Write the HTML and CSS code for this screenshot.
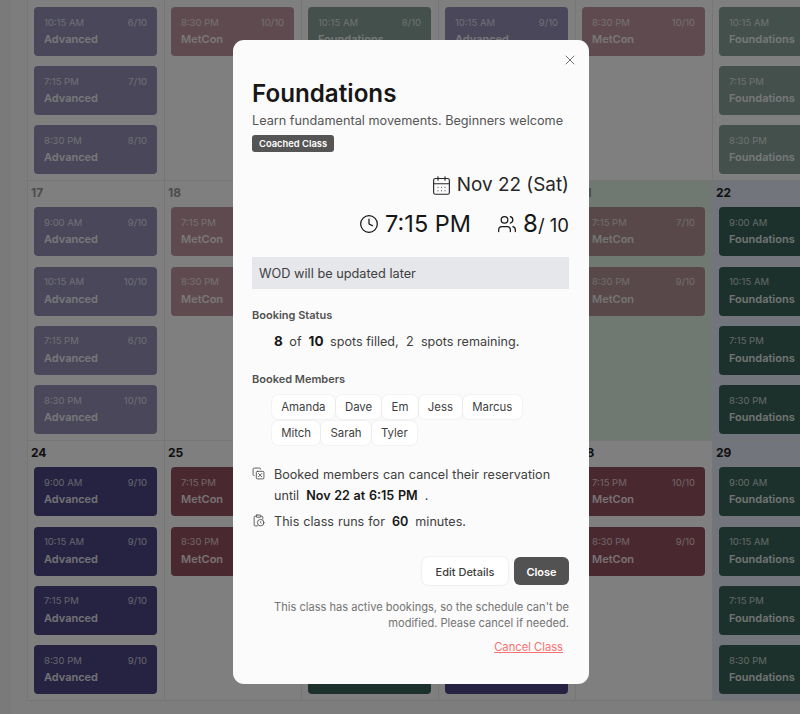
FILE: index.html
```html
<!DOCTYPE html>
<html lang="en">
<head>
    <meta charset="UTF-8">
    <title>Class schedule</title>
    <link rel="stylesheet" href="styles.css">
</head>
<body>
    <div class="page">
    <div class="calendar">
        <div class="week week-first">
            <div class="day">
                <div class="card advanced past"><div class="card-top"><span>10:15 AM</span><span>6/10</span></div><div class="card-name">Advanced</div></div>
                <div class="card advanced past"><div class="card-top"><span>7:15 PM</span><span>7/10</span></div><div class="card-name">Advanced</div></div>
                <div class="card advanced past"><div class="card-top"><span>8:30 PM</span><span>8/10</span></div><div class="card-name">Advanced</div></div>
            </div>
            <div class="day">
                <div class="card metcon past"><div class="card-top"><span>8:30 PM</span><span>10/10</span></div><div class="card-name">MetCon</div></div>
            </div>
            <div class="day">
                <div class="card foundations past"><div class="card-top"><span>10:15 AM</span><span>8/10</span></div><div class="card-name">Foundations</div></div>
            </div>
            <div class="day">
                <div class="card advanced past"><div class="card-top"><span>10:15 AM</span><span>9/10</span></div><div class="card-name">Advanced</div></div>
            </div>
            <div class="day">
                <div class="card metcon past"><div class="card-top"><span>8:30 PM</span><span>10/10</span></div><div class="card-name">MetCon</div></div>
            </div>
            <div class="day">
                <div class="card foundations past"><div class="card-top"><span>10:15 AM</span><span>8/10</span></div><div class="card-name">Foundations</div></div>
                <div class="card foundations past"><div class="card-top"><span>7:15 PM</span><span>8/10</span></div><div class="card-name">Foundations</div></div>
                <div class="card foundations past"><div class="card-top"><span>8:30 PM</span><span>8/10</span></div><div class="card-name">Foundations</div></div>
            </div>
        </div>
        <div class="week">
            <div class="day">
                <div class="day-num muted">17</div>
                <div class="card advanced past"><div class="card-top"><span>9:00 AM</span><span>9/10</span></div><div class="card-name">Advanced</div></div>
                <div class="card advanced past"><div class="card-top"><span>10:15 AM</span><span>10/10</span></div><div class="card-name">Advanced</div></div>
                <div class="card advanced past"><div class="card-top"><span>7:15 PM</span><span>6/10</span></div><div class="card-name">Advanced</div></div>
                <div class="card advanced past"><div class="card-top"><span>8:30 PM</span><span>10/10</span></div><div class="card-name">Advanced</div></div>
            </div>
            <div class="day">
                <div class="day-num muted">18</div>
                <div class="card metcon past"><div class="card-top"><span>7:15 PM</span><span>8/10</span></div><div class="card-name">MetCon</div></div>
                <div class="card metcon past"><div class="card-top"><span>8:30 PM</span><span>8/10</span></div><div class="card-name">MetCon</div></div>
            </div>
            <div class="day"><div class="day-num muted">19</div></div>
            <div class="day"><div class="day-num muted">20</div></div>
            <div class="day today">
                <div class="day-num muted">21</div>
                <div class="card metcon past"><div class="card-top"><span>7:15 PM</span><span>7/10</span></div><div class="card-name">MetCon</div></div>
                <div class="card metcon past"><div class="card-top"><span>8:30 PM</span><span>9/10</span></div><div class="card-name">MetCon</div></div>
            </div>
            <div class="day saturday">
                <div class="day-num">22</div>
                <div class="card foundations"><div class="card-top"><span>9:00 AM</span><span>8/10</span></div><div class="card-name">Foundations</div></div>
                <div class="card foundations"><div class="card-top"><span>10:15 AM</span><span>8/10</span></div><div class="card-name">Foundations</div></div>
                <div class="card foundations"><div class="card-top"><span>7:15 PM</span><span>8/10</span></div><div class="card-name">Foundations</div></div>
                <div class="card foundations"><div class="card-top"><span>8:30 PM</span><span>8/10</span></div><div class="card-name">Foundations</div></div>
            </div>
        </div>
        <div class="week">
            <div class="day">
                <div class="day-num">24</div>
                <div class="card advanced"><div class="card-top"><span>9:00 AM</span><span>9/10</span></div><div class="card-name">Advanced</div></div>
                <div class="card advanced"><div class="card-top"><span>10:15 AM</span><span>9/10</span></div><div class="card-name">Advanced</div></div>
                <div class="card advanced"><div class="card-top"><span>7:15 PM</span><span>9/10</span></div><div class="card-name">Advanced</div></div>
                <div class="card advanced"><div class="card-top"><span>8:30 PM</span><span>9/10</span></div><div class="card-name">Advanced</div></div>
            </div>
            <div class="day">
                <div class="day-num">25</div>
                <div class="card metcon"><div class="card-top"><span>7:15 PM</span><span>9/10</span></div><div class="card-name">MetCon</div></div>
                <div class="card metcon"><div class="card-top"><span>8:30 PM</span><span>9/10</span></div><div class="card-name">MetCon</div></div>
            </div>
            <div class="day">
                <div class="day-num">26</div>
                <div class="card foundations"><div class="card-top"><span>9:00 AM</span><span>9/10</span></div><div class="card-name">Foundations</div></div>
                <div class="card foundations"><div class="card-top"><span>10:15 AM</span><span>9/10</span></div><div class="card-name">Foundations</div></div>
                <div class="card foundations"><div class="card-top"><span>7:15 PM</span><span>9/10</span></div><div class="card-name">Foundations</div></div>
                <div class="card foundations"><div class="card-top"><span>8:30 PM</span><span>9/10</span></div><div class="card-name">Foundations</div></div>
            </div>
            <div class="day">
                <div class="day-num">27</div>
                <div class="card advanced"><div class="card-top"><span>9:00 AM</span><span>9/10</span></div><div class="card-name">Advanced</div></div>
                <div class="card advanced"><div class="card-top"><span>10:15 AM</span><span>9/10</span></div><div class="card-name">Advanced</div></div>
                <div class="card advanced"><div class="card-top"><span>7:15 PM</span><span>9/10</span></div><div class="card-name">Advanced</div></div>
                <div class="card advanced"><div class="card-top"><span>8:30 PM</span><span>9/10</span></div><div class="card-name">Advanced</div></div>
            </div>
            <div class="day">
                <div class="day-num">28</div>
                <div class="card metcon"><div class="card-top"><span>7:15 PM</span><span>10/10</span></div><div class="card-name">MetCon</div></div>
                <div class="card metcon"><div class="card-top"><span>8:30 PM</span><span>9/10</span></div><div class="card-name">MetCon</div></div>
            </div>
            <div class="day saturday">
                <div class="day-num">29</div>
                <div class="card foundations"><div class="card-top"><span>9:00 AM</span><span>9/10</span></div><div class="card-name">Foundations</div></div>
                <div class="card foundations"><div class="card-top"><span>10:15 AM</span><span>9/10</span></div><div class="card-name">Foundations</div></div>
                <div class="card foundations"><div class="card-top"><span>7:15 PM</span><span>9/10</span></div><div class="card-name">Foundations</div></div>
                <div class="card foundations"><div class="card-top"><span>8:30 PM</span><span>9/10</span></div><div class="card-name">Foundations</div></div>
            </div>
        </div>
    </div>
    </div>

    <div class="overlay">
        <div class="modal">
            <button class="modal-x" aria-label="Close">
                <svg viewBox="0 0 24 24" class="icon"><path d="M18 6 6 18"/><path d="m6 6 12 12"/></svg>
            </button>
            <h1 class="modal-title">Foundations</h1>
            <p class="modal-desc">Learn fundamental movements. Beginners welcome</p>
            <span class="badge">Coached Class</span>

            <div class="date-row">
                <svg viewBox="0 0 24 24" class="icon icon-date"><path d="M8 2v4"/><path d="M16 2v4"/><rect width="18" height="18" x="3" y="4" rx="2"/><path d="M3 10h18"/><path d="M8 14h.01"/><path d="M12 14h.01"/><path d="M16 14h.01"/><path d="M8 18h.01"/><path d="M12 18h.01"/><path d="M16 18h.01"/></svg>
                <span>Nov 22 (Sat)</span>
            </div>
            <div class="time-row">
                <svg viewBox="0 0 24 24" class="icon icon-clock"><circle cx="12" cy="12" r="10"/><path d="M12 6v6l4 2"/></svg>
                <span class="time">7:15 PM</span>
                <svg viewBox="0 0 24 24" class="icon icon-users"><path d="M16 21v-2a4 4 0 0 0-4-4H6a4 4 0 0 0-4 4v2"/><circle cx="9" cy="7" r="4"/><path d="M22 21v-2a4 4 0 0 0-3-3.87"/><path d="M16 3.13a4 4 0 0 1 0 7.75"/></svg>
                <span class="count">8<small>/ 10</small></span>
            </div>

            <div class="wod">WOD will be updated later</div>

            <h2 class="section-label label-status">Booking Status</h2>
            <p class="status"><b>8</b> of <b>10</b> spots filled, <span>2</span> spots remaining.</p>

            <h2 class="section-label label-members">Booked Members</h2>
            <div class="chips">
                <span class="chip">Amanda</span>
                <span class="chip">Dave</span>
                <span class="chip">Em</span>
                <span class="chip">Jess</span>
                <span class="chip">Marcus</span>
                <span class="chip">Mitch</span>
                <span class="chip">Sarah</span>
                <span class="chip">Tyler</span>
            </div>

            <div class="note note-first">
                <svg viewBox="0 0 24 24" class="icon icon-note"><line x1="12" x2="18" y1="12" y2="18"/><line x1="12" x2="18" y1="18" y2="12"/><rect width="14" height="14" x="8" y="8" rx="2"/><path d="M4 16c-1.1 0-2-.9-2-2V4c0-1.1.9-2 2-2h10c1.1 0 2 .9 2 2"/></svg>
                <p>Booked members can cancel their reservation until <b>Nov 22 at 6:15 PM</b> .</p>
            </div>
            <div class="note">
                <svg viewBox="0 0 24 24" class="icon icon-note"><rect width="8" height="4" x="8" y="2" rx="1"/><path d="M16 4h2a2 2 0 0 1 2 2v3"/><path d="M8 4H6a2 2 0 0 0-2 2v14a2 2 0 0 0 2 2h4"/><circle cx="16" cy="16" r="6"/><path d="M16 14v2l1 1"/></svg>
                <p>This class runs for <b>60</b> minutes.</p>
            </div>

            <div class="actions">
                <button class="btn btn-edit">Edit Details</button>
                <button class="btn btn-close">Close</button>
            </div>
            <p class="hint">This class has active bookings, so the schedule can't be modified. Please cancel if needed.</p>
            <div class="cancel-wrap"><a class="cancel" href="#">Cancel Class</a></div>
        </div>
    </div>
</body>
</html>
```

FILE: styles.css
```css
* {
    margin: 0;
    padding: 0;
    box-sizing: border-box;
}
html, body {
    height: 714px;
    overflow: hidden;
}
body {
    background: #f4f4f4;
    font-family: Inter, "Liberation Sans", sans-serif;
}
.page {
    margin-left: 11px;
    padding-left: 16px;
    height: 714px;
    background: #fbfbfb;
}
.calendar {
    width: 822px;
}
.week {
    display: grid;
    grid-template-columns: repeat(6, 137px);
    height: 260px;
    border-bottom: 1px solid #ececec;
}
.week-first {
    height: 181.3px;
}
.week-first .day {
    padding-top: 7px;
}
.day {
    background: #fff;
    border-left: 1px solid #ececec;
    padding: 0 7px 0 6px;
    display: flex;
    flex-direction: column;
    gap: 10.2px;
}
.today {
    background: #dff2e4;
}
.saturday {
    background: #e5edf8;
}
.day-num {
    height: 16px;
    padding: 5px 0 0 3px;
    margin-left: -6px;
    font-size: 12px;
    line-height: 14px;
    font-weight: 700;
    color: #222;
}
.day-num.muted {
    color: #999;
}
.card {
    height: 49px;
    flex: none;
    width: 123px;
    border-radius: 4px;
    padding: 8.5px 10px 0;
    color: #fff;
}
.card-top {
    display: flex;
    justify-content: space-between;
    font-size: 9.5px;
    line-height: 14px;
    opacity: .7;
}
.card-name {
    margin-top: 1.5px;
    font-size: 11px;
    line-height: 17px;
    font-weight: 600;
    opacity: .85;
}
.advanced {
    background: #4a4682;
}
.metcon {
    background: #94505f;
}
.foundations {
    background: #386256;
}
.past {
    opacity: .6;
}

.overlay {
    position: fixed;
    top: 0;
    left: 0;
    right: 0;
    bottom: 0;
    background: rgba(0, 0, 0, .5);
    padding: 40px 0 0 233px;
}
.modal {
    position: relative;
    width: 356px;
    height: 644px;
    background: #fbfbfb;
    border-radius: 11px;
    padding: 0 20px 0 19px;
    color: #171717;
}
.icon {
    display: block;
    flex: none;
    fill: none;
    stroke: currentColor;
    stroke-width: 2;
    stroke-linecap: round;
    stroke-linejoin: round;
}
.modal-x {
    position: absolute;
    top: 12px;
    right: 11px;
    width: 16px;
    height: 16px;
    border: none;
    background: none;
    color: #666;
}
.modal-x .icon {
    width: 16px;
    height: 16px;
    stroke-width: 1.4;
}
.modal-title {
    padding-top: 38px;
    font-size: 24.2px;
    line-height: 32px;
    font-weight: 600;
}
.modal-desc {
    margin-top: 1px;
    font-size: 12.7px;
    line-height: 20px;
    color: #555;
}
.badge {
    display: block;
    width: fit-content;
    margin-top: 4px;
    height: 17px;
    padding: 0 7px;
    border-radius: 3px;
    background: #555;
    color: #fff;
    font-size: 9.4px;
    line-height: 17px;
    font-weight: 600;
}
.date-row {
    margin-top: 21px;
    display: flex;
    justify-content: flex-end;
    align-items: center;
    gap: 5px;
    font-size: 18.9px;
    line-height: 24px;
    color: #262626;
}
.icon-date {
    width: 21px;
    height: 21px;
    stroke-width: 1.3;
}
.time-row {
    margin-top: 11px;
    display: flex;
    justify-content: flex-end;
    align-items: center;
}
.icon-clock {
    width: 20px;
    height: 20px;
    stroke-width: 1.5;
    margin-right: 6px;
}
.time {
    font-size: 23.5px;
    line-height: 32px;
    margin-right: 26px;
}
.icon-users {
    width: 20px;
    height: 20px;
    stroke-width: 1.5;
    margin-right: 6px;
}
.count {
    font-size: 24px;
    line-height: 32px;
}
.count small {
    font-size: 18.5px;
    line-height: 1;
}
.wod {
    margin-top: 17px;
    height: 32px;
    padding-left: 7px;
    background: #e5e7eb;
    font-size: 12.75px;
    line-height: 33px;
    color: #404040;
}
.section-label {
    font-size: 11px;
    line-height: 16px;
    font-weight: 600;
    color: #525252;
}
.label-status {
    margin-top: 18px;
}
.status {
    margin-top: 9px;
    padding-left: 22px;
    font-size: 12.6px;
    line-height: 20px;
    color: #404040;
}
.status b {
    margin: 0 3px 0 0;
    font-size: 13.5px;
    line-height: 1;
    font-weight: 700;
    color: #171717;
}
.status b + b {
    margin-left: 3.5px;
}
.status span {
    margin: 0 3.75px;
}
.label-members {
    margin-top: 19px;
}
.chips {
    margin-top: 8px;
    padding-left: 20px;
    display: flex;
    flex-wrap: wrap;
    gap: 2px 1px;
}
.chip {
    height: 24px;
    padding: 0 9.2px;
    background: #fff;
    border-radius: 6px;
    box-shadow: 0 0 2px rgba(0, 0, 0, .12);
    font-size: 11.4px;
    line-height: 24px;
    color: #404040;
}
.note {
    display: flex;
    gap: 9px;
    margin-top: 5px;
    font-size: 12.6px;
    line-height: 21px;
    color: #404040;
}
.note-first {
    margin-top: 18.5px;
}
.note p {
    word-spacing: .5px;
}
.note b {
    font-weight: 600;
    color: #171717;
    margin: 0 3px;
}
.icon-note {
    width: 13px;
    height: 13px;
    stroke-width: 1.5;
    margin-top: 3px;
}
.actions {
    margin-top: 25.5px;
    display: flex;
    justify-content: flex-end;
    gap: 6px;
}
.btn {
    height: 28px;
    border: none;
    border-radius: 6px;
    font-family: inherit;
    font-size: 11px;
    font-weight: 500;
    padding-top: 1px;
}
.btn-edit {
    width: 86px;
    background: #fff;
    color: #404040;
    box-shadow: 0 0 2px rgba(0, 0, 0, .15);
}
.btn-close {
    width: 55px;
    background: #525252;
    color: #fff;
    font-weight: 600;
}
.hint {
    margin-top: 14px;
    font-size: 11.1px;
    line-height: 16px;
    text-align: right;
    color: #737373;
}
.cancel-wrap {
    margin-top: 5.5px;
    padding-right: 6px;
    text-align: right;
    line-height: 16px;
}
.cancel {
    font-size: 11.2px;
    color: #f87171;
}
```
